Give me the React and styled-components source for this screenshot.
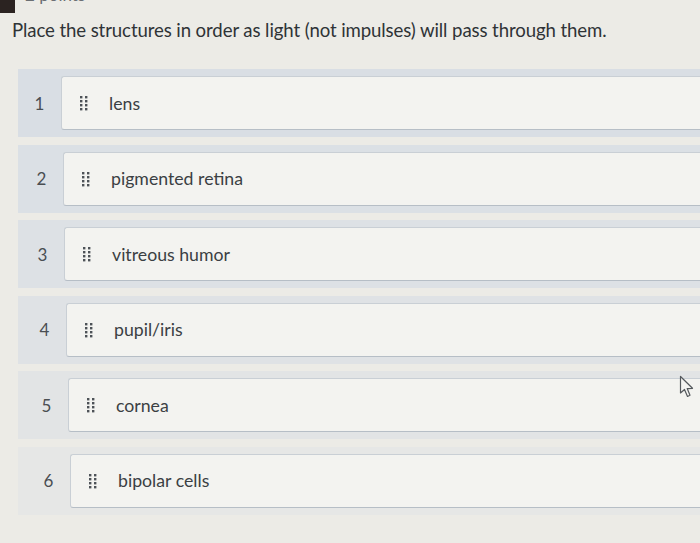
import React from "react";
import styled, { createGlobalStyle } from "styled-components";

const GlobalStyle = createGlobalStyle`
  html, body {
    margin: 0;
    padding: 0;
    background: #ecebe6;
    overflow: hidden;
  }
  body {
    font-family: Lato, "Open Sans", "Liberation Sans", sans-serif;
  }
`;

const Page = styled.div`
  position: relative;
  width: 700px;
  height: 543px;
  overflow: hidden;
`;

const TopStrip = styled.div`
  display: flex;
  align-items: flex-end;
  gap: 10px;
  height: 13px;
  overflow: hidden;
`;

const DarkCorner = styled.div`
  width: 15px;
  height: 13px;
  background: #2b2321;
`;

const Points = styled.span`
  font-size: 17px;
  line-height: 17px;
  color: #6b6f73;
  margin-bottom: 10px;
`;

const Title = styled.h1`
  margin: 6px 0 0 12px;
  font-size: 18.6px;
  font-weight: 400;
  color: #2f3336;
  letter-spacing: -0.1px;
`;

const List = styled.div`
  display: flex;
  flex-direction: column;
  gap: 7.5px;
  margin: 28px 0 0 18px;
`;

const Band = styled.div`
  display: flex;
  align-items: center;
  height: 68px;
  padding-left: ${(p) => p.$shift}px;
  background: ${(p) => p.$tone};
`;

const Num = styled.span`
  width: 43px;
  text-align: center;
  font-size: 17px;
  color: #4a4e52;
`;

const Card = styled.div`
  flex: 1;
  display: flex;
  align-items: center;
  gap: 20px;
  height: 52px;
  padding-left: 17px;
  background: #f3f3f0;
  border: 1px solid #c9cfd5;
  border-bottom-color: #b6bec6;
  border-right: none;
  border-radius: 3px 0 0 3px;
`;

const Label = styled.span`
  font-size: 17.7px;
  color: #3b3f43;
`;

const Cursor = styled.svg`
  position: absolute;
  left: 679px;
  top: 375px;
`;

const Handle = () => (
  <svg width="10" height="16" viewBox="0 0 10 16">
    {[0, 1, 2, 3].map((r) =>
      [0, 1].map((c) => (
        <rect key={`${r}-${c}`} x={1 + c * 5} y={1 + r * 4} width="2.4" height="2.4" fill="#4d5257" />
      ))
    )}
  </svg>
);

const items = [
  { n: 1, text: "lens", shift: 0, tone: "#d9dee4" },
  { n: 2, text: "pigmented retina", shift: 2, tone: "#dbe0e5" },
  { n: 3, text: "vitreous humor", shift: 3, tone: "#dde1e5" },
  { n: 4, text: "pupil/iris", shift: 5, tone: "#dfe2e5" },
  { n: 5, text: "cornea", shift: 7, tone: "#e2e4e5" },
  { n: 6, text: "bipolar cells", shift: 9, tone: "#e6e7e6" },
];

const App = () => (
  <Page>
    <GlobalStyle />
    <TopStrip>
      <DarkCorner />
      <Points>2 points</Points>
    </TopStrip>
    <Title>Place the structures in order as light (not impulses) will pass through them.</Title>
    <List>
      {items.map((it) => (
        <Band key={it.n} $shift={it.shift} $tone={it.tone}>
          <Num>{it.n}</Num>
          <Card>
            <Handle />
            <Label>{it.text}</Label>
          </Card>
        </Band>
      ))}
    </List>
    <Cursor width="16" height="24" viewBox="0 0 16 24">
      <path d="M1.5 1.5 L1.5 18 L5.5 14.5 L8.5 21.5 L11 20.3 L8.2 13.6 L13.5 13.3 Z" fill="#f4f4f2" stroke="#55595d" strokeWidth="1.2" strokeLinejoin="round" />
    </Cursor>
  </Page>
);

export default App;
